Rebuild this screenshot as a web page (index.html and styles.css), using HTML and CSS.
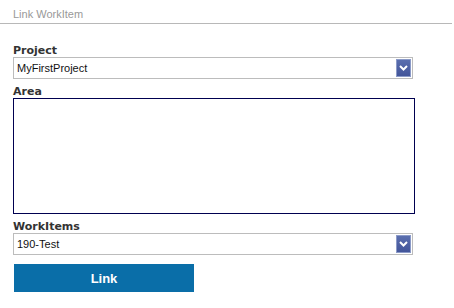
FILE: index.html
```html
<!DOCTYPE html>
<html lang="en">
<head>
    <meta charset="UTF-8">
    <title>Link WorkItem</title>
    <link rel="stylesheet" href="styles.css">
</head>
<body>

<header class="panel-header">Link WorkItem</header>

<div class="form">
    <label class="field-label">Project</label>
    <div class="select">
        <span class="select-text">MyFirstProject</span>
        <span class="select-arrow">
            <svg width="9" height="6" viewBox="0 0 9 6"><path d="M1 1 L4.5 4.5 L8 1" fill="none" stroke="#fff" stroke-width="2"/></svg>
        </span>
    </div>

    <label class="field-label area-label">Area</label>
    <textarea class="area-box"></textarea>

    <label class="field-label">WorkItems</label>
    <div class="select">
        <span class="select-text">190-Test</span>
        <span class="select-arrow">
            <svg width="9" height="6" viewBox="0 0 9 6"><path d="M1 1 L4.5 4.5 L8 1" fill="none" stroke="#fff" stroke-width="2"/></svg>
        </span>
    </div>

    <button class="link-button">Link</button>
</div>

</body>
</html>
```

FILE: styles.css
```css
body {
    margin: 0;
    padding: 0;
    background: #fff;
    font-family: 'Liberation Sans', Arial, sans-serif;
    font-size: 11px;
    color: #111;
}
.panel-header {
    padding: 8px 13px 2px;
    margin-right: 2px;
    line-height: 13px;
    color: #999;
    border-bottom: 1px solid #b8b8b8;
}
.form {
    padding: 20px 13px 0;
    display: flex;
    flex-direction: column;
    align-items: flex-start;
}
.field-label {
    display: block;
    font-family: 'DejaVu Sans', sans-serif;
    font-weight: bold;
    font-size: 11px;
    line-height: 13px;
    color: #333;
    margin-top: 6px;
}
.field-label:first-child {
    margin-top: 0;
}
.select {
    box-sizing: border-box;
    width: 400px;
    height: 22px;
    border: 1px solid #bcbcbc;
    display: flex;
    align-items: center;
    justify-content: space-between;
    padding: 0 1px 0 3px;
    background: #fff;
}
.select-text {
    color: #111;
}
.select-arrow {
    box-sizing: border-box;
    width: 15px;
    height: 18px;
    border: 1px solid #8b9ac8;
    background: linear-gradient(#5a6eae, #42559a);
    display: flex;
    align-items: center;
    justify-content: center;
}
.area-box {
    box-sizing: border-box;
    width: 402px;
    height: 116px;
    border: 1px solid #000050;
    margin: 0;
    padding: 2px;
    resize: none;
    font-family: inherit;
}
.link-button {
    margin: 9px 0 0 1px;
    width: 180px;
    height: 28px;
    border: none;
    background-color: #0a6ea8;
    color: #fff;
    font-family: 'Liberation Sans', Arial, sans-serif;
    font-weight: bold;
    font-size: 13px;
    cursor: pointer;
}
```
